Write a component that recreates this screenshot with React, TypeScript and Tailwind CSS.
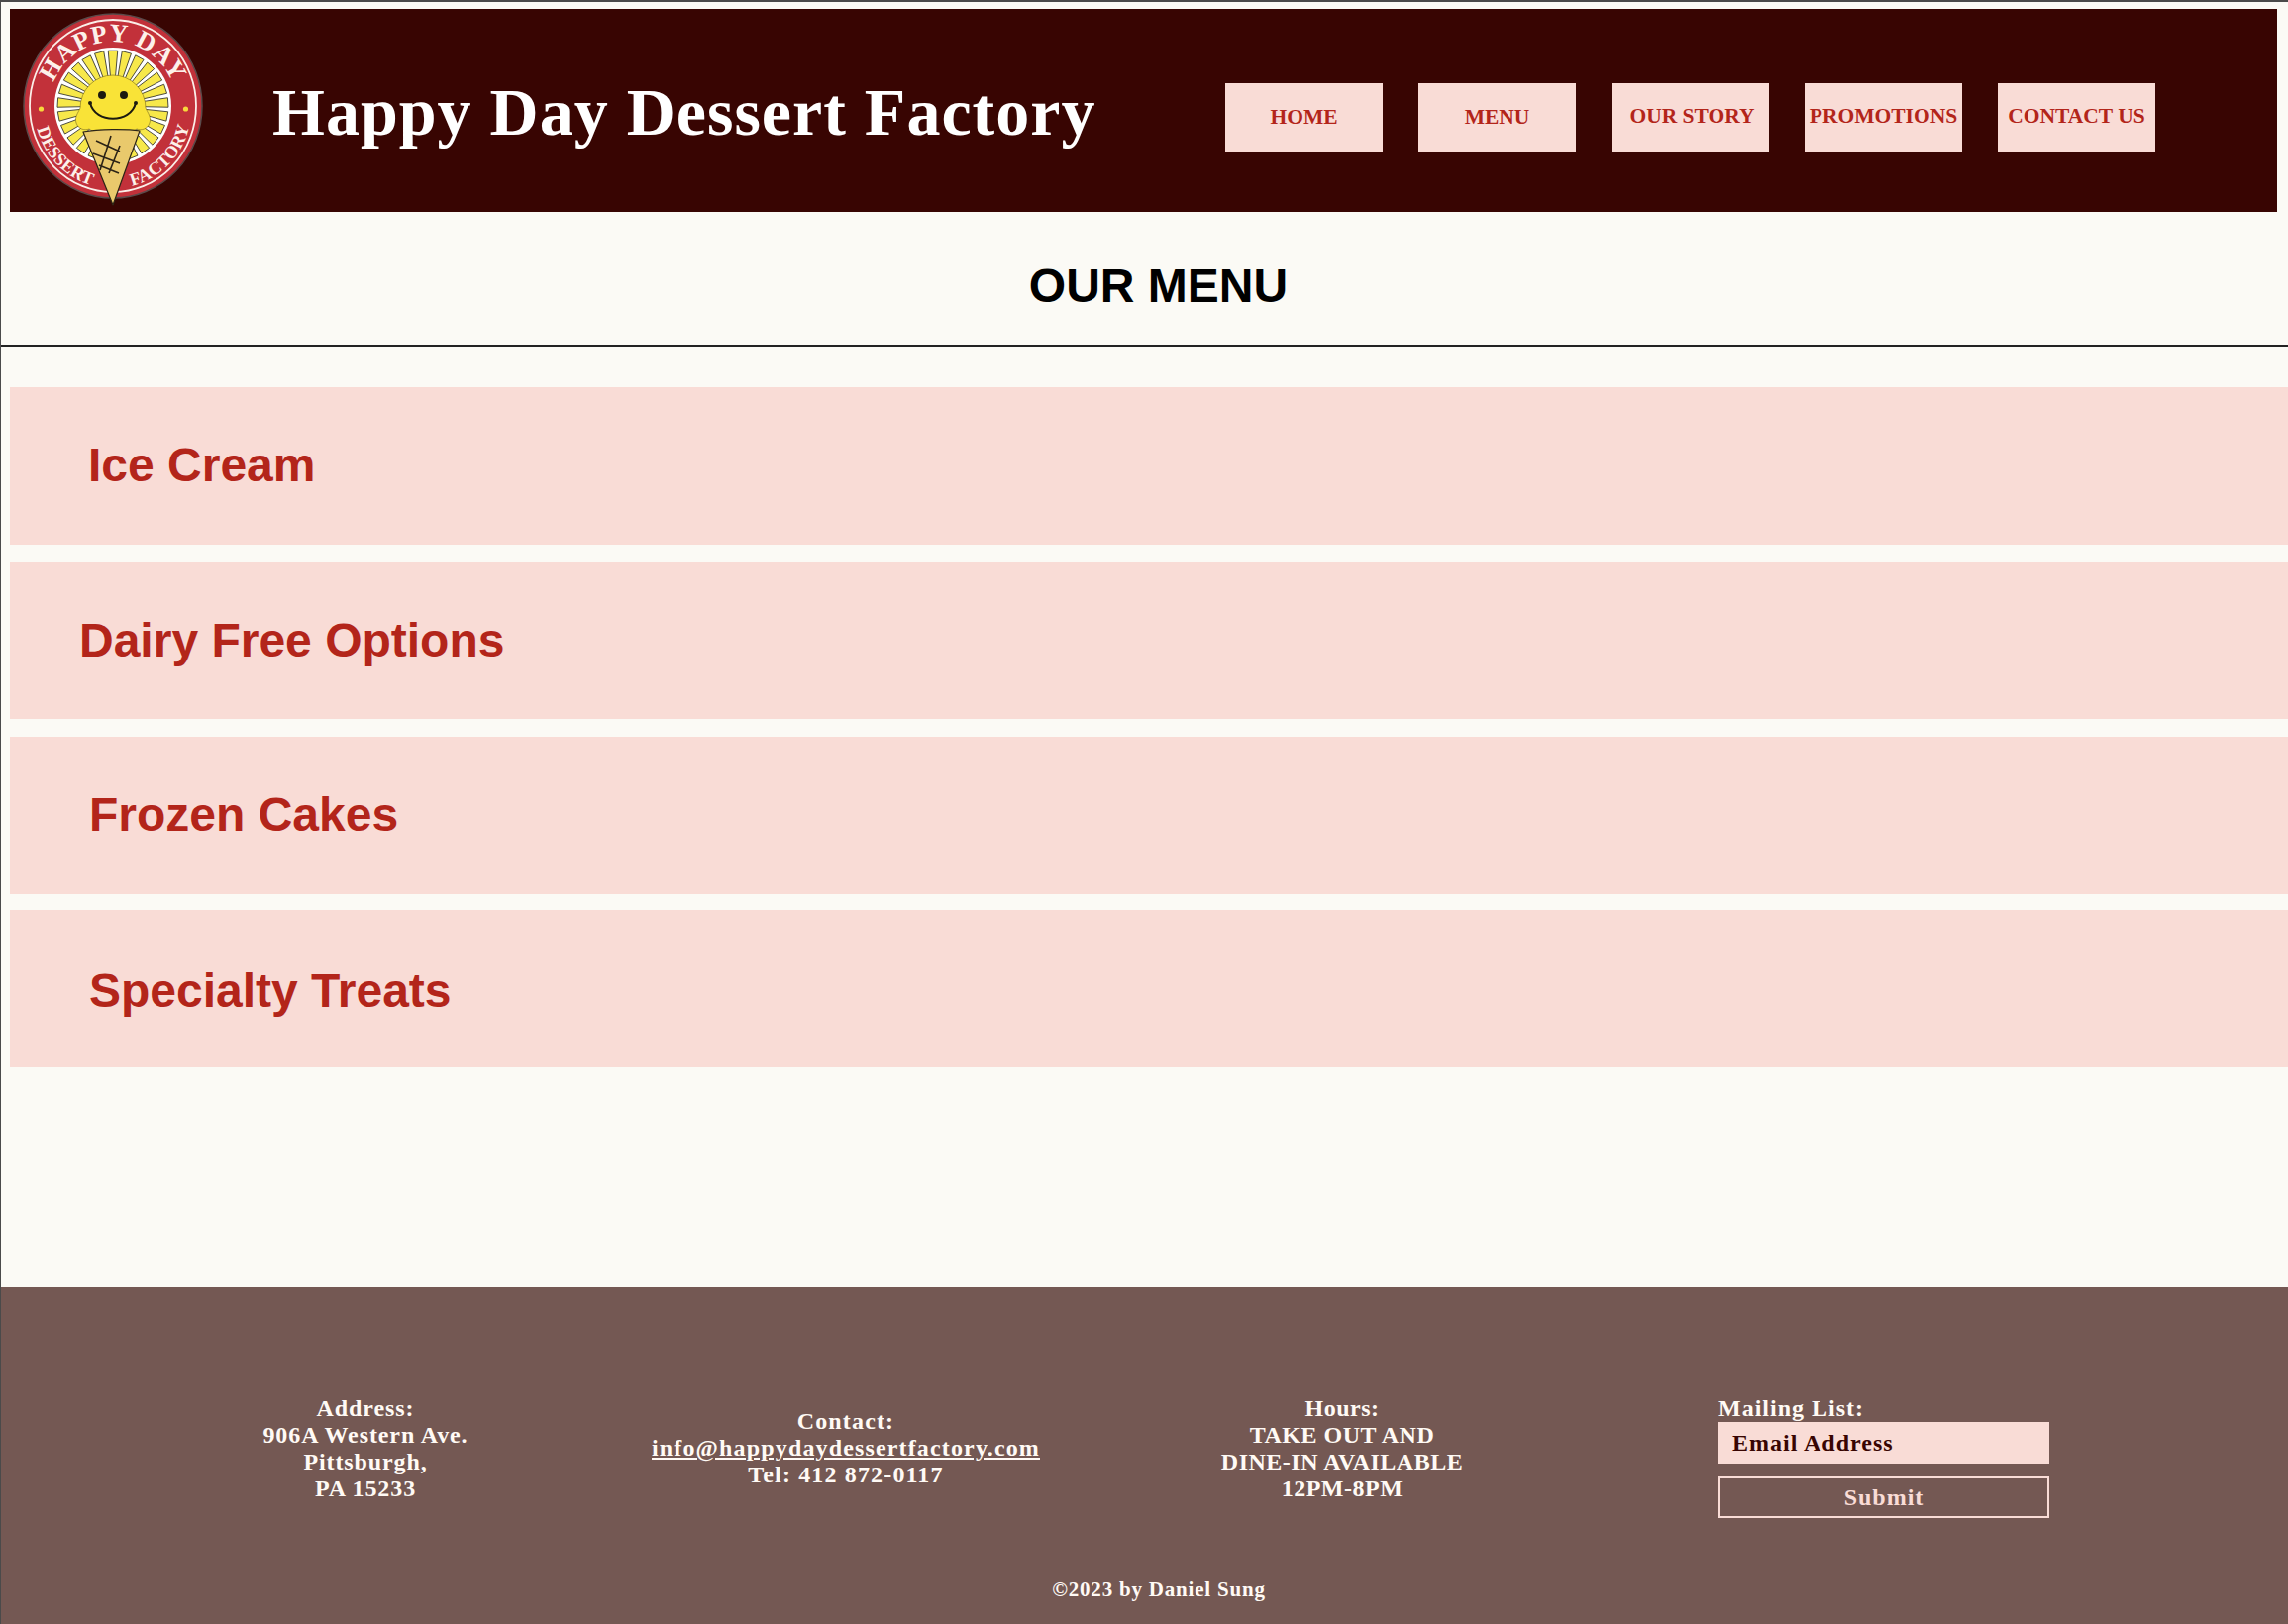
const serif = "font-['Liberation_Serif',serif]";
const navItems = [
  { label: "HOME", offset: "" },
  { label: "MENU", offset: "" },
  { label: "OUR STORY", offset: "pb-[3px] pl-[4px]" },
  { label: "PROMOTIONS", offset: "pb-[3px]" },
  { label: "CONTACT US", offset: "pb-[3px]" },
];
const rows = [
  { label: "Ice Cream", cls: "pl-[79px]" },
  { label: "Dairy Free Options", cls: "pl-[70px]" },
  { label: "Frozen Cakes", cls: "pl-[80px]" },
  { label: "Specialty Treats", cls: "pl-[80px] pt-[6px] -mt-[1.5px]" },
];

function Logo() {
  const cx = 114;
  const cy = 107;
  const rays = Array.from({ length: 25 }, (_, i) => {
    const a = ((i * 360) / 25 - 90) * (Math.PI / 180);
    const d = 0.085;
    const r1 = 28;
    const r2 = 56;
    const p = (r: number, t: number) => `${cx + r * Math.cos(t)},${cy + r * Math.sin(t)}`;
    return `${p(r1, a - d)} ${p(r2, a - d)} ${p(r2, a + d)} ${p(r1, a + d)}`;
  });
  return (
    <svg viewBox="0 9 220 220" className="w-[220px] h-[220px] shrink-0" aria-label="Happy Day Dessert Factory logo">
      <ellipse cx={cx} cy={cy} rx={90} ry={93} fill="#c2313a" stroke="#5b4a4a" strokeWidth="1.5" />
      <ellipse cx={cx} cy={cy} rx={84} ry={87} fill="none" stroke="#fbeee8" strokeWidth="1.8" />
      <circle cx={cx} cy={cy} r={59} fill="#ffffff" />
      {rays.map((pts, i) => (
        <polygon key={i} points={pts} fill="#f7e84a" stroke="#3a3a32" strokeWidth="0.9" />
      ))}
      <circle cx={41.5} cy={110} r={2.6} fill="#f7d93c" />
      <circle cx={187.5} cy={110} r={2.6} fill="#f7d93c" />
      <defs>
        <path id="logoTop" d="M 50 107 A 64 65 0 0 1 178 107" />
        <path id="logoLeft" d="M 36 122 A 80 80 0 0 0 100 189" />
        <path id="logoRight" d="M 128 189 A 80 80 0 0 0 192 122" />
      </defs>
      <text fill="#fdf1ea" fontFamily="Liberation Serif, serif" fontSize="26" fontWeight="700" letterSpacing="0.6">
        <textPath href="#logoTop" startOffset="50%" textAnchor="middle">HAPPY DAY</textPath>
      </text>
      <text fill="#fdf1ea" fontFamily="Liberation Serif, serif" fontSize="18" fontWeight="700" letterSpacing="0.2">
        <textPath href="#logoLeft" startOffset="50%" textAnchor="middle">DESSERT</textPath>
      </text>
      <text fill="#fdf1ea" fontFamily="Liberation Serif, serif" fontSize="18" fontWeight="700" letterSpacing="0.2">
        <textPath href="#logoRight" startOffset="50%" textAnchor="middle">FACTORY</textPath>
      </text>
      <path
        d="M 81 109 A 33 33 0 1 1 147 109 C 149 114 153 118 151 124 C 149 130 143 132 138 130 C 134 133 130 133 126 131 C 122 134 118 134 114 131 C 110 134 106 134 102 131 C 98 133 94 133 90 130 C 85 132 79 130 77 124 C 75 118 79 114 81 109 Z"
        fill="#f9e337"
        stroke="#7a6a1c"
        strokeWidth="0.6"
      />
      <circle cx={103} cy={96} r={4} fill="#1c1a10" />
      <circle cx={125} cy={96} r={4} fill="#1c1a10" />
      <path d="M 91 104 C 96 125 132 125 137 104" fill="none" stroke="#1c1a10" strokeWidth="2" strokeLinecap="round" />
      <circle cx={91} cy={104} r={2} fill="#1c1a10" />
      <circle cx={137} cy={104} r={2} fill="#1c1a10" />
      <path d="M 84 133 C 100 130 128 130 141 132 L 114 207 Z" fill="#e9c96c" stroke="#2c2416" strokeWidth="1.2" strokeLinejoin="round" />
      <path d="M 97 142 L 121 153 M 94 155 L 121 165 M 100 167 L 120 175 M 112 137 L 101 172 M 121 147 L 110 175" stroke="#2c2416" strokeWidth="1.6" fill="none" />
    </svg>
  );
}

function Info({ lines, link, tracking }: { lines: string[]; link?: number; tracking: string }) {
  return (
    <div className={`w-[400px] text-center text-[24px] leading-[27px] font-bold text-[#fffaf5] ${tracking}`}>
      {lines.map((l, i) => (
        <div key={l}>{i === link ? <a className="underline">{l}</a> : l}</div>
      ))}
    </div>
  );
}

export default function App() {
  return (
    <div className="w-[2310px] h-[1640px] overflow-hidden flex flex-col bg-[#fbfaf5] border-t-2 border-l border-[#4a4a4a]">
      <header className={`mt-[7px] ml-[9px] mr-[11px] h-[205px] bg-[#380502] flex items-center ${serif}`}>
        <div className="w-[220px] h-[205px] -ml-[10px] overflow-hidden shrink-0">
          <Logo />
        </div>
        <h1 className="ml-[55px] mt-[2px] w-[1050px] text-[68px] leading-none font-bold text-white tracking-[1px] whitespace-nowrap">
          Happy Day Dessert Factory
        </h1>
        <nav className="-ml-[88px] flex gap-[36px] mt-[14px]">
          {navItems.map((n) => (
            <a
              key={n.label}
              className={`w-[159px] h-[69px] bg-[#f9dcd6] text-[#b3251a] font-bold text-[21.5px] flex items-center justify-center whitespace-nowrap ${n.offset}`}
            >
              {n.label}
            </a>
          ))}
        </nav>
      </header>
      <div className="h-[136px] border-b-2 border-[#222222] flex items-center justify-center pl-[28px] pt-[16px]">
        <h2 className="font-['Liberation_Sans',sans-serif] font-bold text-[48px] leading-none text-black">OUR MENU</h2>
      </div>
      <main className="flex-1 pt-[41px] pl-[9px] flex flex-col gap-[18px] font-['Liberation_Sans',sans-serif]">
        {rows.map((r) => (
          <div key={r.label} className={`h-[158.5px] bg-[#f9dcd6] flex items-center ${r.cls}`}>
            <span className="font-bold text-[48px] leading-none text-[#b3251a]">{r.label}</span>
          </div>
        ))}
      </main>
      <footer className={`h-[340px] bg-[#745853] flex flex-col ${serif}`}>
        <div className="h-[300px] flex items-start pl-[168px] pt-[109px]">
          <Info tracking="tracking-[0.9px]" lines={["Address:", "906A Western Ave.", "Pittsburgh,", "PA 15233"]} />
          <div className="ml-[85px] pt-[13px]">
            <Info tracking="tracking-[1.15px]" lines={["Contact:", "info@happydaydessertfactory.com", "Tel: 412 872-0117"]} link={1} />
          </div>
          <div className="ml-[101px]">
            <Info tracking="tracking-[0.5px]" lines={["Hours:", "TAKE OUT AND", "DINE-IN AVAILABLE", "12PM-8PM"]} />
          </div>
          <div className="ml-[180px] w-[334px] font-bold text-[24px] tracking-[1px] text-[#fffaf5]">
            <div className="leading-[27px]">Mailing List:</div>
            <div className="h-[42px] bg-[#f9dcd6] text-[#380502] flex items-center pl-[14px]">Email Address</div>
            <button className="mt-[13px] w-full h-[42px] border-2 border-[#f9dcd6] text-[#f9dcd6] font-bold text-center">Submit</button>
          </div>
        </div>
        <div className="text-center text-[21px] tracking-[0.8px] font-bold leading-[24px] text-[#fffaf5] pl-[29px] -mt-[7px]">©2023 by Daniel Sung</div>
      </footer>
    </div>
  );
}
